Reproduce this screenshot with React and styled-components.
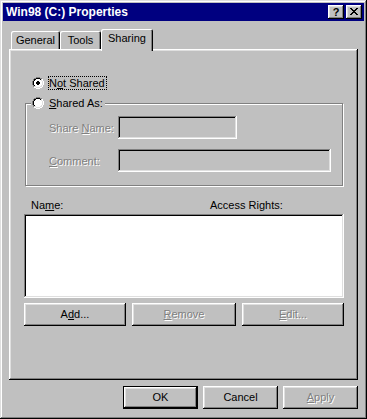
import styled, { createGlobalStyle } from 'styled-components';

const GlobalStyle = createGlobalStyle`
  body {
    margin: 0;
    background: #c0c0c0;
  }
  * {
    box-sizing: border-box;
  }
`;

const raised = 'inset -1px -1px #000, inset 1px 1px #fff, inset -2px -2px #808080, inset 2px 2px #dfdfdf';
const sunken = 'inset -1px -1px #fff, inset 1px 1px #808080, inset -2px -2px #dfdfdf, inset 2px 2px #000';

// pixel maps for the little bitmaps (radio, close glyph)
const RADIO_ROWS = [
  '....GGGG....',
  '..GGKKKKGG..',
  '.GKKwwwwKLW.',
  '.GKwwwwwwLW.',
  'GKwwwwwwwwLW',
  'GKwwwwwwwwLW',
  'GKwwwwwwwwLW',
  'GKwwwwwwwwLW',
  '.GKwwwwwwLW.',
  '.GLLwwwwLLW.',
  '..WWLLLLWW..',
  '....WWWW....',
];
const DOT_ROWS = ['.XX.', 'XXXX', 'XXXX', '.XX.'];
const CLOSE_ROWS = [
  'XX....XX',
  '.XX..XX.',
  '..XXXX..',
  '...XX...',
  '..XXXX..',
  '.XX..XX.',
  'XX....XX',
];
const COLORS = { G: '#808080', K: '#000', L: '#dfdfdf', W: '#fff', w: '#fff', X: '#000' };

const pixelPaths = (rows, dx = 0, dy = 0) => {
  const byColor = {};
  rows.forEach((row, y) => {
    [...row].forEach((ch, x) => {
      if (ch === '.') return;
      byColor[ch] = (byColor[ch] || '') + `M${x + dx} ${y + dy}h1v1h-1z`;
    });
  });
  return Object.entries(byColor).map(([ch, d]) => <path key={ch} d={d} fill={COLORS[ch]} />);
};

const Radio = ({ checked }) => (
  <svg width="12" height="12" viewBox="0 0 12 12" shapeRendering="crispEdges" style={{ flex: 'none' }}>
    {pixelPaths(RADIO_ROWS)}
    {checked && pixelPaths(DOT_ROWS, 4, 4)}
  </svg>
);

const CloseGlyph = () => (
  <svg width="8" height="7" viewBox="0 0 8 7" shapeRendering="crispEdges">
    {pixelPaths(CLOSE_ROWS)}
  </svg>
);

const Window = styled.div`
  width: 367px;
  height: 419px;
  padding: 3px;
  background: #c0c0c0;
  box-shadow: inset -1px -1px #000, inset 1px 1px #dfdfdf, inset -2px -2px #808080, inset 2px 2px #fff;
  font-family: "Liberation Sans", Arial, sans-serif;
  font-size: 11px;
  color: #000;
  display: flex;
  flex-direction: column;
`;

const TitleBar = styled.div`
  height: 18px;
  background: #000080;
  display: flex;
  align-items: center;
  justify-content: space-between;
  padding: 0 2px 0 3px;
`;

const Title = styled.span`
  color: #fff;
  font-weight: bold;
  font-size: 12px;
  line-height: 18px;
`;

const TitleButtons = styled.div`
  display: flex;
  gap: 2px;
`;

const TitleButton = styled.div`
  width: 16px;
  height: 14px;
  background: #c0c0c0;
  box-shadow: ${raised};
  display: flex;
  align-items: center;
  justify-content: center;
  font-weight: bold;
  font-size: 11px;
  line-height: 14px;
  padding-bottom: 1px;
`;

const Body = styled.div`
  flex: 1;
  display: flex;
  flex-direction: column;
  padding: 8px 6px 7px;
`;

const TabStrip = styled.div`
  height: 20px;
  display: flex;
  align-items: flex-end;
  padding-left: 2px;
`;

const Tab = styled.div`
  width: ${p => p.$w}px;
  height: ${p => (p.$active ? 22 : 18)}px;
  margin-bottom: ${p => (p.$active ? -2 : 0)}px;
  position: relative;
  z-index: ${p => (p.$active ? 1 : 0)};
  background: #c0c0c0;
  border-radius: 2px 2px 0 0;
  box-shadow: inset 1px 1px #fff, inset -1px 0 #000, inset -2px 0 #808080;
  text-align: center;
  line-height: 13px;
  padding-top: 3px;
`;

const Panel = styled.div`
  height: 331px;
  display: flex;
  flex-direction: column;
  padding: 27px 14px 0 15px;
  box-shadow: inset -1px -1px #000, inset 1px 1px #fff, inset -2px -2px #808080, inset 2px 2px #dfdfdf;
`;

const RadioRow = styled.div`
  display: flex;
  align-items: center;
  gap: 5px;
  height: 14px;
  margin-left: ${p => p.$indent || 0}px;
`;

const RadioLabel = styled.span`
  line-height: 12px;
  padding-right: 1px;
  outline: ${p => (p.$focus ? '1px dotted #000' : 'none')};
`;

const GroupBox = styled.fieldset`
  margin: 6px 1px 0;
  padding: 0 0 0 5px;
  min-width: 0;
  border: 1px solid #808080;
  box-shadow: 1px 1px #fff, inset 1px 1px #fff;
`;

const Legend = styled.legend`
  padding: 0 1px;
  background: #c0c0c0;
`;

const FieldGrid = styled.div`
  display: grid;
  grid-template-columns: 69px auto;
  row-gap: 10px;
  align-items: center;
  padding: 6px 0 13px 18px;
`;

const Disabled = styled.span`
  color: #808080;
  text-shadow: 1px 1px 0 #fff;
`;

const TextBox = styled.div`
  width: ${p => p.$w}px;
  height: 23px;
  background: #c0c0c0;
  box-shadow: ${sunken};
`;

const ListHeader = styled.div`
  display: grid;
  grid-template-columns: 179px auto;
  padding-left: 7px;
  margin-top: 13px;
  line-height: 13px;
`;

const ListBox = styled.div`
  height: 84px;
  margin-top: 2px;
  background: #fff;
  box-shadow: ${sunken};
`;

const ButtonRow = styled.div`
  display: flex;
  justify-content: space-between;
  margin-top: 5px;
`;

const Footer = styled.div`
  display: flex;
  justify-content: flex-end;
  gap: 5px;
  margin-top: 6px;
`;

const Button = styled.div`
  width: ${p => p.$w}px;
  height: 23px;
  background: #c0c0c0;
  border: ${p => (p.$default ? '1px solid #000' : 'none')};
  box-shadow: ${raised};
  display: flex;
  align-items: center;
  justify-content: center;
  line-height: 13px;
  padding-bottom: 1px;
`;

export default function App() {
  return (
    <>
      <GlobalStyle />
      <Window>
        <TitleBar>
          <Title>Win98 (C:) Properties</Title>
          <TitleButtons>
            <TitleButton>?</TitleButton>
            <TitleButton><CloseGlyph /></TitleButton>
          </TitleButtons>
        </TitleBar>
        <Body>
          <TabStrip>
            <Tab $w={49}>General</Tab>
            <Tab $w={41}>Tools</Tab>
            <Tab $w={52} $active>Sharing</Tab>
          </TabStrip>
          <Panel>
            <RadioRow $indent={8}>
              <Radio checked />
              <RadioLabel $focus>N<u>o</u>t Shared</RadioLabel>
            </RadioRow>
            <GroupBox>
              <Legend>
                <RadioRow>
                  <Radio />
                  <RadioLabel><u>S</u>hared As:</RadioLabel>
                </RadioRow>
              </Legend>
              <FieldGrid>
                <Disabled>Share <u>N</u>ame:</Disabled>
                <TextBox $w={119} />
                <Disabled><u>C</u>omment:</Disabled>
                <TextBox $w={213} />
              </FieldGrid>
            </GroupBox>
            <ListHeader>
              <span>Na<u>m</u>e:</span>
              <span>Access Rights:</span>
            </ListHeader>
            <ListBox />
            <ButtonRow>
              <Button $w={102}>A<u>d</u>d...</Button>
              <Button $w={104}><Disabled><u>R</u>emove</Disabled></Button>
              <Button $w={102}><Disabled><u>E</u>dit...</Disabled></Button>
            </ButtonRow>
          </Panel>
          <Footer>
            <Button $w={75} $default>OK</Button>
            <Button $w={75}>Cancel</Button>
            <Button $w={75}><Disabled><u>A</u>pply</Disabled></Button>
          </Footer>
        </Body>
      </Window>
    </>
  );
}
